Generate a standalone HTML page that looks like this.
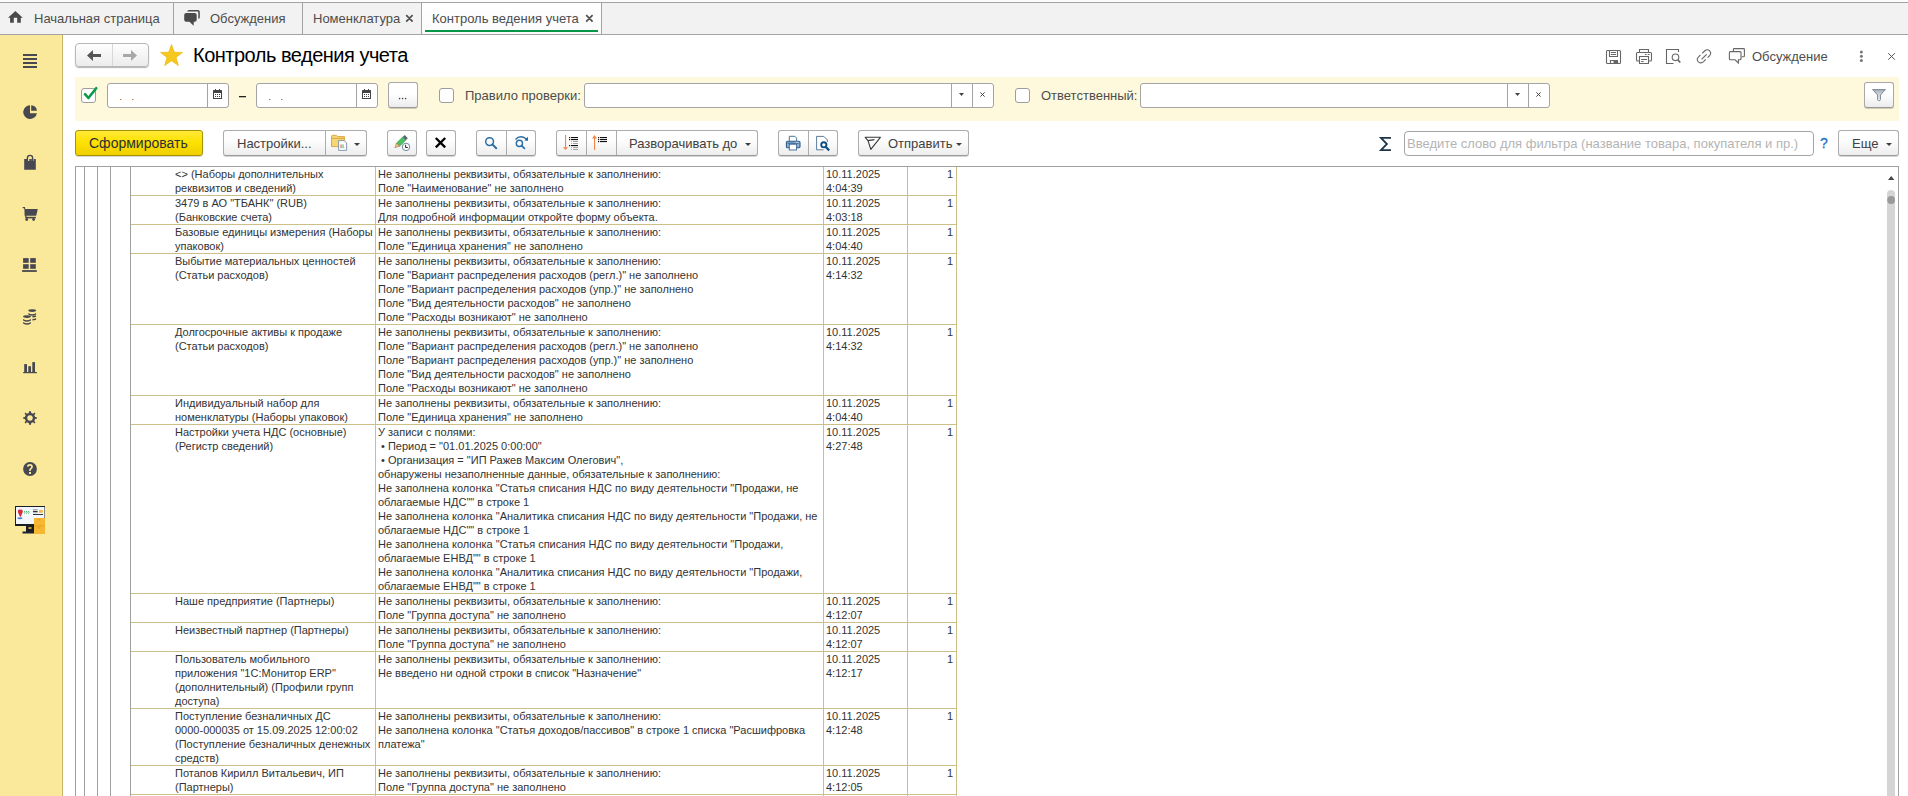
<!DOCTYPE html>
<html><head><meta charset="utf-8">
<style>
*{box-sizing:border-box;margin:0;padding:0}
html,body{width:1908px;height:796px;overflow:hidden;background:#fff;font-family:"Liberation Sans",sans-serif;color:#333}
.a{position:absolute}
svg{position:absolute;overflow:visible}
.tb{position:absolute;left:0;top:0;width:1908px;height:35px;background:#fcfcfc}
.tbar{position:absolute;left:0;top:2px;width:1908px;height:33px;background:#f2f2f2;border-top:1px solid #a3a3a3;border-bottom:1px solid #a3a3a3}
.tab{position:absolute;top:3px;height:31px;font-size:13px;color:#4d4d4d;line-height:31px;white-space:nowrap}
.sep{position:absolute;top:2px;width:1px;height:33px;background:#a3a3a3}
.side{position:absolute;left:0;top:35px;width:63px;height:761px;background:#fbe99b;border-right:1px solid #c4b462}
.fbar{position:absolute;left:75px;top:77px;width:1824px;height:44px;background:#fef8da}
.inp{position:absolute;background:#fff;border:1px solid #a9a9a9;border-radius:3px}
.btn{position:absolute;background:linear-gradient(#fefefe,#ececec);border:1px solid #b8b8b8;border-radius:3px;box-shadow:0 1px 1px rgba(0,0,0,.3)}
.lbl{position:absolute;font-size:13px;color:#4d4d4d;white-space:nowrap;line-height:16px}
.cb{position:absolute;width:15px;height:15px;background:#fff;border:1px solid #a3a3a3;border-radius:2px}
.vl{position:absolute;width:1px;background:#a0a0a0}
.gv{position:absolute;width:1px;background:#cdbf88}
.hl{position:absolute;height:1px;background:#cdbf88}
.c{position:absolute;font-size:11px;line-height:14px;white-space:pre;color:#333}
.r{text-align:right}
.inp{position:absolute;background:#fff;border:1px solid #a4a4a4;border-radius:3px;height:25px;top:83px}
.isp{position:absolute;top:84px;width:1px;height:23px;background:#a4a4a4}
.fbtn{position:absolute;top:82px;height:26px;background:linear-gradient(#fff 0,#fff 45%,#ececec 100%);border:1px solid #a8a8a8;border-bottom-color:#999;border-radius:3px;box-shadow:0 1px 0 rgba(0,0,0,.18)}
.cb{position:absolute;top:88px;width:15px;height:15px;background:#fff;border:1px solid #9d9d9d;border-radius:3px}
.tbtn{position:absolute;top:130px;height:26px;background:linear-gradient(#fff 0,#fdfdfd 40%,#ededed 100%);border:1px solid #acacac;border-bottom-color:#9a9a9a;border-radius:3px;box-shadow:0 1px 0 rgba(0,0,0,.16)}
.tsp{position:absolute;top:131px;width:1px;height:24px;background:#acacac}
.tl{position:absolute;top:136px;font-size:13px;line-height:16px;color:#404040;white-space:nowrap}

</style></head><body>
<div class="tb"><div class="tbar"></div>
<div style="position:absolute;left:421px;top:3px;width:180px;height:31px;background:linear-gradient(#fff,#fafafa)"></div>
<div class="sep" style="left:173px"></div>
<div class="sep" style="left:302px"></div>
<div class="sep" style="left:421px"></div>
<div class="sep" style="left:601px"></div>
<div class="tab" style="left:34px">Начальная страница</div>
<div class="tab" style="left:210px">Обсуждения</div>
<div class="tab" style="left:313px">Номенклатура</div>
<div class="tab" style="left:432px">Контроль ведения учета</div>
<div class="a" style="left:425px;top:30px;width:173px;height:2px;background:#069547"></div>
<svg style="left:0;top:0" width="1" height="1" fill="#4a4a4a">
<path d="M15.4 11 L22.8 17.8 H20.8 V22.8 H17.2 V17.8 H13.8 V22.8 H10.1 V17.8 H8 Z"/>
<path d="M186.2 13.1 H194.7 Q196.7 13.1 196.7 15.1 V19.7 Q196.7 21.7 194.7 21.7 H193.8 L193.6 25.8 L189.5 21.7 H186.2 Q184.2 21.7 184.2 19.7 V15.1 Q184.2 13.1 186.2 13.1 Z"/>
<path d="M187 11.6 Q187.6 10.1 189 10.1 H198 Q199.8 10.1 199.8 12 V17.2 Q199.8 18.7 198.3 18.7 V12.4 Q198.3 11.6 197.5 11.6 Z"/>
<path d="M406.2 15.2 L412.6 21.6 M412.6 15.2 L406.2 21.6 M586.2 15.2 L592.6 21.6 M592.6 15.2 L586.2 21.6" stroke="#505050" stroke-width="1.7"/>
</svg>
</div>

<div class="side"></div>
<div class="a" style="left:61px;top:35px;width:1px;height:761px;background:#fdee9f"></div>
<svg style="left:0;top:0" width="1" height="1" fill="#484850">
<rect x="23" y="54" width="14" height="2"/><rect x="23" y="58" width="14" height="2"/><rect x="23" y="62" width="14" height="2"/><rect x="23" y="66" width="14" height="2"/>
<path d="M30 105.2 V113.2 H36.9 A6.9 6.9 0 1 1 30 105.2 Z"/>
<path d="M31.2 105.2 A5.8 5.8 0 0 1 36.9 110.8 H31.2 Z"/>
<path d="M24.2 159 H27.3 V161 H29.3 V159 H31.8 V161 H33.7 V159 H35.8 V169.8 H24.2 Z"/>
<path d="M27.4 161.2 V158 A2.6 2.6 0 0 1 32.6 158 V161.2" fill="none" stroke="#484850" stroke-width="1.4"/>
<path d="M22.1 207 H25 L25.2 209 H37.8 L36.2 215.7 H24.6 L24.4 209 Z"/>
<rect x="25.2" y="215" width="1.3" height="2.5"/><rect x="25.4" y="216.8" width="10.4" height="1.6"/>
<circle cx="26.7" cy="219.5" r="1.4"/><circle cx="33.6" cy="219.5" r="1.4"/>
<rect x="23.1" y="258.1" width="5.6" height="4.7"/><rect x="30.2" y="258.1" width="5.6" height="4.7"/>
<rect x="23.1" y="264.2" width="5.6" height="4.6"/><rect x="30.2" y="264.2" width="5.6" height="4.6"/>
<rect x="22.1" y="270.1" width="14.7" height="1.8"/>
<rect x="24.2" y="364.1" width="2.8" height="8"/><rect x="28.3" y="366.2" width="2.7" height="5.9"/><rect x="32.3" y="362.1" width="2.7" height="10"/><rect x="23.2" y="372" width="13.7" height="1.2"/>
<path d="M30 411.2 L31 411.2 L31.2 413 L33.2 413.8 L34.3 412.4 L35.5 413.6 L34.3 415 L35.1 417 L36.8 417.2 L36.8 418.8 L35.1 419 L34.3 421 L35.5 422.4 L34.3 423.6 L33.2 422.2 L31.2 423 L31 424.8 L29 424.8 L28.8 423 L26.8 422.2 L25.7 423.6 L24.5 422.4 L25.7 421 L24.9 419 L23.2 418.8 L23.2 417.2 L24.9 417 L25.7 415 L24.5 413.6 L25.7 412.4 L26.8 413.8 L28.8 413 L29 411.2 Z M30 415.2 A2.8 2.8 0 1 0 30.01 415.2 Z" fill-rule="evenodd"/>
<circle cx="30" cy="469" r="6.9"/>
</svg>
<svg style="left:0;top:0" width="1" height="1">
<g fill="#484850">
<ellipse cx="32.2" cy="310.6" rx="3.9" ry="1.3"/><path d="M28.3 313 Q32.2 315.6 36.1 313 V314.4 Q32.2 317 28.3 314.4 Z"/>
<path d="M32.4 316 Q34.6 316 36.1 315.3 V316.8 Q34.6 317.6 32.4 317.6 Z"/><path d="M32.4 319 Q34.6 319 36.1 318.3 V319.8 Q34.6 320.6 32.4 320.6 Z"/>
<ellipse cx="27" cy="316.6" rx="3.9" ry="1.3"/><path d="M23.1 319 Q27 321.6 30.9 319 V320.4 Q27 323 23.1 320.4 Z"/><path d="M23.1 322 Q27 324.6 30.9 322 V323.4 Q27 326 23.1 323.4 Z"/>
</g>
<path d="M27.7 466.6 Q27.9 464.9 30 464.9 Q32 464.9 32 466.7 Q32 467.9 30.9 468.6 Q30 469.2 30 470.5 V470.9" fill="none" stroke="#fbe99b" stroke-width="1.7"/>
<rect x="29" y="472" width="2" height="2" fill="#fbe99b"/>
</svg>
<svg style="left:0;top:0" width="1" height="1">
<rect x="15" y="506" width="30" height="20" fill="#1b1d24"/>
<rect x="16" y="507" width="28.5" height="17" fill="#f3f6fc"/>
<rect x="26" y="526" width="8" height="6" fill="#1b1d24"/><rect x="28.5" y="527" width="3" height="2" fill="#c9a23a"/>
<rect x="22.5" y="531.5" width="12" height="2" fill="#1f2633"/>
<path d="M19.9 509.8 Q22 509 22.8 511 Q23 512.6 20.4 517.2 Q17.6 512.6 17.9 511 Q18.6 509 19.9 509.8 Z" fill="#d92b3a"/>
<ellipse cx="19.9" cy="518.2" rx="2.6" ry="1" fill="#4a86d8"/>
<path d="M24 511 L25.4 512.3 L24 513.6 M26 511 L27.4 512.3 L26 513.6 M28 511 L29.4 512.3 L28 513.6" stroke="#3dbb6a" stroke-width="0.9" fill="none"/>
<rect x="33" y="509.2" width="4.6" height="1.2" fill="#9a9a9a"/><rect x="33" y="511" width="4.6" height="1" fill="#333"/><rect x="33" y="512.2" width="4.6" height="1" fill="#aaa"/><rect x="33" y="514" width="10" height="0.9" fill="#222"/>
<rect x="39" y="510" width="3.8" height="2.8" fill="#f6b940"/>
<rect x="34" y="518" width="11" height="16" fill="#f7b733"/>
<rect x="34" y="525.5" width="11" height="0.8" fill="#e8a020"/>
<rect x="37.5" y="518.5" width="3" height="2" fill="#efa51d"/><rect x="37.5" y="526.5" width="3" height="2" fill="#efa51d"/>
</svg>

<div class="btn" style="left:75px;top:43px;width:74px;height:24px;border-radius:4px"></div>
<div class="a" style="left:112px;top:44px;width:1px;height:22px;background:#d8d8d8"></div>
<svg style="left:0;top:0" width="1" height="1"><path d="M87 55.5 L93 50 L93 54 L101 54 L101 57 L93 57 L93 61 Z" fill="#555"/><path d="M137 55.5 L131 50 L131 54 L123 54 L123 57 L131 57 L131 61 Z" fill="#a8a8a8"/>
<path d="M171.5 44.5 L174.3 52.2 L182.5 52.4 L176 57.4 L178.4 65.5 L171.5 60.8 L164.6 65.5 L167 57.4 L160.5 52.4 L168.7 52.2 Z" fill="#f6c81d" stroke="#e5b000" stroke-width="0.6"/></svg>
<div class="a" style="left:193px;top:43px;font-size:20px;letter-spacing:-0.5px;line-height:24px;color:#000;white-space:nowrap">Контроль ведения учета</div>
<svg style="left:0;top:0" width="1" height="1" fill="none" stroke="#666" stroke-width="1.1">
<path d="M1607.5 50.5 H1619.5 Q1620.5 50.5 1620.5 51.5 V62.5 Q1620.5 63.5 1619.5 63.5 H1607.5 Q1606.5 63.5 1606.5 62.5 V51.5 Q1606.5 50.5 1607.5 50.5 Z"/>
<path d="M1609.5 50.5 V56.5 H1617.5 V50.5"/><path d="M1610.8 52.5 H1616 M1610.8 54.5 H1616" stroke-width="1"/>
<path d="M1610.5 63.5 V60.5 H1617.5 V63.5"/><rect x="1613.5" y="60.5" width="3.6" height="2.8" fill="#666" stroke="none"/>
<path d="M1639.5 52.5 V49.5 H1648.5 V52.5"/>
<path d="M1639.5 61 H1637.5 Q1636.5 61 1636.5 60 V53.5 Q1636.5 52.5 1637.5 52.5 H1650.5 Q1651.5 52.5 1651.5 53.5 V60 Q1651.5 61 1650.5 61 H1648.5"/>
<path d="M1639.5 63.5 V56.5 H1648.5 V63.5 Z"/><path d="M1645 54.5 H1646.6 M1647.8 54.5 H1649.6 M1641.2 59.5 H1647 M1641.2 61.5 H1643.6" stroke-width="1"/>
<path d="M1673.5 63.5 H1666.5 V49.5 H1678.5 V52"/>
<circle cx="1675.5" cy="57.3" r="3.3"/><path d="M1677.8 59.8 L1680.3 62.5" stroke-width="1.7"/>
<path d="M1702.2 53.4 L1704.6 51 Q1707 48.6 1709.6 50.8 Q1712 53.4 1709.4 55.8 L1707.6 57.6"/>
<path d="M1705.7 59.4 L1703.6 61.6 Q1701 64 1698.4 61.8 Q1696 59.2 1698.6 56.8 L1700.4 55"/>
<path d="M1701.6 59.4 L1706.6 54.4"/>
<path d="M1733.4 51 V49.4 Q1733.4 48.6 1734.2 48.6 H1743.6 Q1744.4 48.6 1744.4 49.4 V56 Q1744.4 56.8 1743.6 56.8 H1741.6" stroke-width="1.1"/>
<path d="M1730.2 51.6 H1740 Q1741 51.6 1741 52.6 V58.8 Q1741 59.8 1740 59.8 H1738.4 V62.9 L1735 59.8 H1730.2 Q1729.4 59.8 1729.4 58.8 V52.6 Q1729.4 51.6 1730.2 51.6 Z" stroke-width="1.1"/>
<path d="M1888.3 53.2 L1894.8 59.7 M1894.8 53.2 L1888.3 59.7" stroke="#555" stroke-width="1"/>
</svg>
<svg style="left:0;top:0" width="1" height="1" fill="#777"><circle cx="1861.4" cy="52" r="1.5"/><circle cx="1861.4" cy="56.3" r="1.5"/><circle cx="1861.4" cy="60.5" r="1.5"/></svg>
<div class="lbl" style="left:1752px;top:49px">Обсуждение</div>

<div class="a" style="left:75px;top:77px;width:1824px;height:44px;background:#fef9dc"></div>
<div class="cb" style="left:81px"></div>
<svg style="left:0;top:0" width="1" height="1"><path d="M85 94.2 L88.4 98 L96.2 88.2" fill="none" stroke="#0b9a47" stroke-width="2.6" stroke-linecap="round" stroke-linejoin="round"/></svg>
<div class="inp" style="left:107px;width:122px"></div><div class="isp" style="left:207px"></div>
<div class="inp" style="left:256px;width:122px"></div><div class="isp" style="left:356px"></div>
<svg style="left:0;top:0" width="1" height="1" fill="#444">
<g id="cal"><path d="M213 90.4 Q213 90 213.5 90 H221.5 Q222 90 222 90.4 V98.4 Q222 99 221.5 99 H213.5 Q213 99 213 98.4 Z M214 93 V98 H221 V93 Z" fill-rule="evenodd"/><rect x="215" y="89" width="1" height="2"/><rect x="219" y="89" width="1" height="2"/>
<rect x="215" y="94" width="1" height="1"/><rect x="217" y="94" width="1" height="1"/><rect x="219" y="94" width="1" height="1"/><rect x="215" y="96" width="1" height="1"/><rect x="217" y="96" width="1" height="1"/><rect x="219" y="96" width="1" height="1"/></g>
<use href="#cal" x="149" y="0"/>
<rect x="239" y="96" width="7" height="1.3" fill="#222"/>
<rect x="120" y="99" width="1.4" height="1" fill="#b07a40"/><rect x="132" y="99" width="1.4" height="1" fill="#b07a40"/>
<rect x="269" y="99" width="1.4" height="1" fill="#b07a40"/><rect x="281" y="99" width="1.4" height="1" fill="#b07a40"/>
</svg>
<div class="fbtn" style="left:388px;width:30px"></div>
<svg style="left:0;top:0" width="1" height="1" fill="#444"><circle cx="399.6" cy="98.6" r="0.8"/><circle cx="402.6" cy="98.6" r="0.8"/><circle cx="405.6" cy="98.6" r="0.8"/></svg>
<div class="cb" style="left:439px"></div>
<div class="lbl" style="left:465px;top:88px">Правило проверки:</div>
<div class="inp" style="left:584px;width:410px"></div><div class="isp" style="left:951px"></div><div class="isp" style="left:972px"></div>
<div class="cb" style="left:1015px"></div>
<div class="lbl" style="left:1041px;top:88px">Ответственный:</div>
<div class="inp" style="left:1140px;width:410px"></div><div class="isp" style="left:1507px"></div><div class="isp" style="left:1528px"></div>
<svg style="left:0;top:0" width="1" height="1">
<path d="M959 93 H964 L961.5 96 Z" fill="#444"/><path d="M980.4 92.4 L984.6 96.6 M984.6 92.4 L980.4 96.6" stroke="#444" stroke-width="1"/>
<path d="M1515 93 H1520 L1517.5 96 Z" fill="#444"/><path d="M1536.4 92.4 L1540.6 96.6 M1540.6 92.4 L1536.4 96.6" stroke="#444" stroke-width="1"/>
</svg>
<div class="fbtn" style="left:1864px;width:30px"></div>
<svg style="left:0;top:0" width="1" height="1"><defs><linearGradient id="fg" x1="0" y1="0" x2="0" y2="1"><stop offset="0" stop-color="#a4aeb9"/><stop offset="0.5" stop-color="#d3d9df"/><stop offset="1" stop-color="#eef0f3"/></linearGradient></defs>
<path d="M1872.6 89.6 H1885.4 L1880.4 95 V99.6 Q1880.4 100.6 1879.4 100.6 H1878.6 Q1877.6 100.6 1877.6 99.6 V95 Z" fill="url(#fg)" stroke="#7d8894" stroke-width="1"/></svg>

<div class="a" style="left:75px;top:130px;width:128px;height:26px;border:1px solid #a89200;border-radius:3px;background:linear-gradient(#ffe93a,#fde300 45%,#f0cf00);box-shadow:0 1px 0 rgba(0,0,0,.15)"></div>
<div class="tl" style="left:89px;top:135px;font-size:14px;color:#2e2e38">Сформировать</div>
<div class="tbtn" style="left:223px;width:144px"></div><div class="tsp" style="left:325px"></div>
<div class="tl" style="left:237px">Настройки...</div>
<div class="tbtn" style="left:387px;width:30px"></div>
<div class="tbtn" style="left:426px;width:30px"></div>
<div class="tbtn" style="left:476px;width:60px"></div><div class="tsp" style="left:506px"></div>
<div class="tbtn" style="left:556px;width:202px"></div><div class="tsp" style="left:586px"></div><div class="tsp" style="left:616px"></div>
<div class="tl" style="left:629px">Разворачивать до</div>
<div class="tbtn" style="left:778px;width:60px"></div><div class="tsp" style="left:808px"></div>
<div class="tbtn" style="left:858px;width:111px"></div>
<div class="tl" style="left:888px">Отправить</div>
<div class="a" style="left:1404px;top:131px;width:410px;height:25px;border:1px solid #a4a4a4;border-radius:4px;background:#fff"></div>
<div class="tl" style="left:1407px;color:#b4b4b4">Введите слово для фильтра (название товара, покупателя и пр.)</div>
<div class="tl" style="left:1820px;color:#1a72c0;font-size:14px;-webkit-text-stroke:0.3px #1a72c0;top:135px">?</div>
<div class="tbtn" style="left:1838px;width:61px"></div>
<div class="tl" style="left:1852px">Еще</div>
<svg style="left:0;top:0" width="1" height="1">
<g fill="#404040"><path d="M354 143 H360 L357 146 Z"/><path d="M745 143 H751 L748 146 Z"/><path d="M956 143 H962 L959 146 Z"/><path d="M1886 143 H1892 L1889 146 Z"/></g>
<!-- folder + doc -->
<path d="M331.5 137 Q331.5 135.3 333 135.3 H336.4 L337.6 136.6 H344.4 V146.6 H331.5 Z" fill="#f5d774" stroke="#d8a23a" stroke-width="0.9"/>
<path d="M331.5 138.4 H344.4" stroke="#d8a23a" stroke-width="0.9"/>
<path d="M338.6 140.6 H344.2 L346.6 143 V150.4 H338.6 Z" fill="#fff" stroke="#7890a4" stroke-width="0.9"/>
<rect x="340.6" y="144.4" width="0.9" height="3" fill="#e03030"/><rect x="342.6" y="144.4" width="0.9" height="3" fill="#3ab04a"/><rect x="340" y="147.6" width="4.5" height="0.5" fill="#888"/>
<!-- pencil -->
<path d="M396.5 143 L402.6 137.1 L405.7 140.3 L399.6 146.2 Z" fill="#4cc062" stroke="#2f8f43" stroke-width="0.5"/>
<path d="M402.6 137.1 L404.8 135.1 L407.8 138.2 L405.7 140.3 Z" fill="#5b6673"/>
<path d="M394.8 147.7 L396.5 143 L399.6 146.2 Z" fill="#f5c27a" stroke="#8a6a3a" stroke-width="0.5"/>
<circle cx="406" cy="146.9" r="3.7" fill="#fff" stroke="#5c7a94" stroke-width="0.9"/><path d="M405.6 144.8 V147.5 H407.8" fill="none" stroke="#222" stroke-width="1"/>
<!-- X -->
<path d="M435.8 138 L445.2 147.4 M445.2 138 L435.8 147.4" stroke="#000" stroke-width="2.3"/>
<!-- search -->
<g fill="none" stroke="#2a6ea6"><circle cx="489.6" cy="141.6" r="3.9" stroke-width="1.5"/><path d="M492.4 144.4 L496.2 148.2" stroke-width="2" stroke-linecap="round"/>
<circle cx="519.4" cy="143.4" r="3.1" stroke-width="1.4"/><path d="M521.6 145.6 L524.4 148.4" stroke-width="1.7" stroke-linecap="round"/>
<path d="M515.5 139.4 Q520 134.6 526 138.6" stroke-width="1.4"/></g>
<path d="M527.8 136.8 L528 140.8 L524.4 140.6 Z" fill="#1a5a94"/>
<!-- sort -->
<g fill="#f08648"><rect x="565" y="135" width="1.1" height="13"/><path d="M563 147.2 H568 L565.5 150 Z"/><rect x="594" y="137" width="1.1" height="13"/><path d="M592 138.4 H597 L594.5 135 Z"/></g>
<g fill="#111"><rect x="569" y="137" width="1.2" height="1.2"/><rect x="571" y="137" width="7" height="1.1"/><rect x="569" y="139" width="1.2" height="1.2"/><rect x="571" y="139" width="7" height="1.1"/><rect x="569" y="145" width="1.2" height="1.2"/><rect x="571" y="145" width="7" height="1.1"/>
<rect x="598" y="137" width="1.2" height="1.2"/><rect x="600" y="137" width="7" height="1.1"/><rect x="598" y="139" width="1.2" height="1.2"/><rect x="600" y="139" width="7" height="1.1"/><rect x="598" y="141" width="1.2" height="1.2"/><rect x="600" y="141" width="7" height="1.1"/></g>
<g fill="#999"><rect x="571" y="141" width="0.9" height="0.9"/><rect x="573" y="141" width="5" height="0.9"/><rect x="571" y="143" width="0.9" height="0.9"/><rect x="573" y="143" width="5" height="0.9"/><rect x="571" y="147" width="0.9" height="0.9"/><rect x="573" y="147" width="5" height="0.9"/><rect x="571" y="149" width="0.9" height="0.9"/><rect x="573" y="149" width="5" height="0.9"/></g>
<!-- printer -->
<path d="M789.3 141.2 V136.3 H794.8 L796.6 138.1 V141.2" fill="#fff" stroke="#3a6690" stroke-width="0.9"/>
<rect x="786.4" y="141.2" width="13.6" height="6.6" rx="1.4" fill="#8fb0d4" stroke="#2c5a86" stroke-width="1.1"/>
<path d="M787.6 143.2 H798.8" stroke="#2c5a86" stroke-width="0.9"/><rect x="795.6" y="141.8" width="1" height="1" fill="#fff"/><rect x="797.4" y="141.8" width="1" height="1" fill="#fff"/>
<rect x="789.3" y="144.2" width="7.3" height="5.8" fill="#fff" stroke="#3a6690" stroke-width="0.9"/>
<!-- preview -->
<path d="M823.5 149.8 H816.6 V136.4 H823.8 L827.4 140 V142" fill="#fff" stroke="#4a6e8e" stroke-width="0.9"/>
<circle cx="823.8" cy="144.8" r="2.6" fill="none" stroke="#0d4f82" stroke-width="1.9"/><path d="M825.8 147 L829.2 150.4" stroke="#0d4f82" stroke-width="2.2"/>
<!-- send -->
<path d="M865.2 137.3 H880.4 L870.8 149.4 L868 140.6 Z M868 140.6 L874.4 139.6" fill="none" stroke="#3a3a3a" stroke-width="1.1" stroke-linejoin="round"/>
<!-- sigma -->
<path d="M1391 137.9 H1381 L1386.9 144 L1381 150.1 H1391" fill="none" stroke="#1f3646" stroke-width="1.8" stroke-linejoin="miter"/>
</svg>

<div class="a" style="left:75px;top:166px;width:1824px;height:1px;background:#a0a0a0"></div>
<div class="vl" style="left:75px;top:166px;height:630px"></div>
<div class="vl" style="left:84px;top:166px;height:630px"></div>
<div class="vl" style="left:97px;top:166px;height:630px"></div>
<div class="vl" style="left:110px;top:166px;height:630px"></div>
<div class="vl" style="left:130px;top:166px;height:630px"></div>
<div class="vl" style="left:1898px;top:166px;height:630px"></div>
<div class="gv" style="left:375px;top:167px;height:629px"></div>
<div class="gv" style="left:823px;top:167px;height:629px"></div>
<div class="gv" style="left:907px;top:167px;height:629px"></div>
<div class="gv" style="left:956px;top:167px;height:629px"></div>
<div class="c" style="left:175px;top:167px">&lt;&gt; (Наборы дополнительных
реквизитов и сведений)</div>
<div class="c" style="left:378px;top:167px">Не заполнены реквизиты, обязательные к заполнению:
Поле "Наименование" не заполнено</div>
<div class="c" style="left:826px;top:167px">10.11.2025
4:04:39</div>
<div class="c r" style="left:907px;width:46px;top:167px">1</div>
<div class="hl" style="left:131px;top:195px;width:826px"></div>
<div class="c" style="left:175px;top:196px">3479 в АО "ТБАНК" (RUB)
(Банковские счета)</div>
<div class="c" style="left:378px;top:196px">Не заполнены реквизиты, обязательные к заполнению:
Для подробной информации откройте форму объекта.</div>
<div class="c" style="left:826px;top:196px">10.11.2025
4:03:18</div>
<div class="c r" style="left:907px;width:46px;top:196px">1</div>
<div class="hl" style="left:131px;top:224px;width:826px"></div>
<div class="c" style="left:175px;top:225px">Базовые единицы измерения (Наборы
упаковок)</div>
<div class="c" style="left:378px;top:225px">Не заполнены реквизиты, обязательные к заполнению:
Поле "Единица хранения" не заполнено</div>
<div class="c" style="left:826px;top:225px">10.11.2025
4:04:40</div>
<div class="c r" style="left:907px;width:46px;top:225px">1</div>
<div class="hl" style="left:131px;top:253px;width:826px"></div>
<div class="c" style="left:175px;top:254px">Выбытие материальных ценностей
(Статьи расходов)</div>
<div class="c" style="left:378px;top:254px">Не заполнены реквизиты, обязательные к заполнению:
Поле "Вариант распределения расходов (регл.)" не заполнено
Поле "Вариант распределения расходов (упр.)" не заполнено
Поле "Вид деятельности расходов" не заполнено
Поле "Расходы возникают" не заполнено</div>
<div class="c" style="left:826px;top:254px">10.11.2025
4:14:32</div>
<div class="c r" style="left:907px;width:46px;top:254px">1</div>
<div class="hl" style="left:131px;top:324px;width:826px"></div>
<div class="c" style="left:175px;top:325px">Долгосрочные активы к продаже
(Статьи расходов)</div>
<div class="c" style="left:378px;top:325px">Не заполнены реквизиты, обязательные к заполнению:
Поле "Вариант распределения расходов (регл.)" не заполнено
Поле "Вариант распределения расходов (упр.)" не заполнено
Поле "Вид деятельности расходов" не заполнено
Поле "Расходы возникают" не заполнено</div>
<div class="c" style="left:826px;top:325px">10.11.2025
4:14:32</div>
<div class="c r" style="left:907px;width:46px;top:325px">1</div>
<div class="hl" style="left:131px;top:395px;width:826px"></div>
<div class="c" style="left:175px;top:396px">Индивидуальный набор для
номенклатуры (Наборы упаковок)</div>
<div class="c" style="left:378px;top:396px">Не заполнены реквизиты, обязательные к заполнению:
Поле "Единица хранения" не заполнено</div>
<div class="c" style="left:826px;top:396px">10.11.2025
4:04:40</div>
<div class="c r" style="left:907px;width:46px;top:396px">1</div>
<div class="hl" style="left:131px;top:424px;width:826px"></div>
<div class="c" style="left:175px;top:425px">Настройки учета НДС (основные)
(Регистр сведений)</div>
<div class="c" style="left:378px;top:425px">У записи с полями:
 • Период = "01.01.2025 0:00:00"
 • Организация = "ИП Ражев Максим Олегович",
обнаружены незаполненные данные, обязательные к заполнению:
Не заполнена колонка "Статья списания НДС по виду деятельности "Продажи, не
облагаемые НДС"" в строке 1
Не заполнена колонка "Аналитика списания НДС по виду деятельности "Продажи, не
облагаемые НДС"" в строке 1
Не заполнена колонка "Статья списания НДС по виду деятельности "Продажи,
облагаемые ЕНВД"" в строке 1
Не заполнена колонка "Аналитика списания НДС по виду деятельности "Продажи,
облагаемые ЕНВД"" в строке 1</div>
<div class="c" style="left:826px;top:425px">10.11.2025
4:27:48</div>
<div class="c r" style="left:907px;width:46px;top:425px">1</div>
<div class="hl" style="left:131px;top:593px;width:826px"></div>
<div class="c" style="left:175px;top:594px">Наше предприятие (Партнеры)</div>
<div class="c" style="left:378px;top:594px">Не заполнены реквизиты, обязательные к заполнению:
Поле "Группа доступа" не заполнено</div>
<div class="c" style="left:826px;top:594px">10.11.2025
4:12:07</div>
<div class="c r" style="left:907px;width:46px;top:594px">1</div>
<div class="hl" style="left:131px;top:622px;width:826px"></div>
<div class="c" style="left:175px;top:623px">Неизвестный партнер (Партнеры)</div>
<div class="c" style="left:378px;top:623px">Не заполнены реквизиты, обязательные к заполнению:
Поле "Группа доступа" не заполнено</div>
<div class="c" style="left:826px;top:623px">10.11.2025
4:12:07</div>
<div class="c r" style="left:907px;width:46px;top:623px">1</div>
<div class="hl" style="left:131px;top:651px;width:826px"></div>
<div class="c" style="left:175px;top:652px">Пользователь мобильного
приложения "1С:Монитор ERP"
(дополнительный) (Профили групп
доступа)</div>
<div class="c" style="left:378px;top:652px">Не заполнены реквизиты, обязательные к заполнению:
Не введено ни одной строки в список "Назначение"</div>
<div class="c" style="left:826px;top:652px">10.11.2025
4:12:17</div>
<div class="c r" style="left:907px;width:46px;top:652px">1</div>
<div class="hl" style="left:131px;top:708px;width:826px"></div>
<div class="c" style="left:175px;top:709px">Поступление безналичных ДС
0000-000035 от 15.09.2025 12:00:02
(Поступление безналичных денежных
средств)</div>
<div class="c" style="left:378px;top:709px">Не заполнены реквизиты, обязательные к заполнению:
Не заполнена колонка "Статья доходов/пассивов" в строке 1 списка "Расшифровка
платежа"</div>
<div class="c" style="left:826px;top:709px">10.11.2025
4:12:48</div>
<div class="c r" style="left:907px;width:46px;top:709px">1</div>
<div class="hl" style="left:131px;top:765px;width:826px"></div>
<div class="c" style="left:175px;top:766px">Потапов Кирилл Витальевич, ИП
(Партнеры)</div>
<div class="c" style="left:378px;top:766px">Не заполнены реквизиты, обязательные к заполнению:
Поле "Группа доступа" не заполнено</div>
<div class="c" style="left:826px;top:766px">10.11.2025
4:12:05</div>
<div class="c r" style="left:907px;width:46px;top:766px">1</div>
<div class="hl" style="left:131px;top:794px;width:826px"></div>
<div class="a" style="left:1887px;top:190px;width:8px;height:606px;background:#d5d5d5;border-radius:4px 4px 0 0"></div>
<svg style="left:0;top:0" width="1" height="1"><path d="M1888 180 H1894.4 L1891.2 176 Z" fill="#444"/><circle cx="1891.1" cy="200" r="3.9" fill="#9a9a9a"/></svg>

</body></html>
